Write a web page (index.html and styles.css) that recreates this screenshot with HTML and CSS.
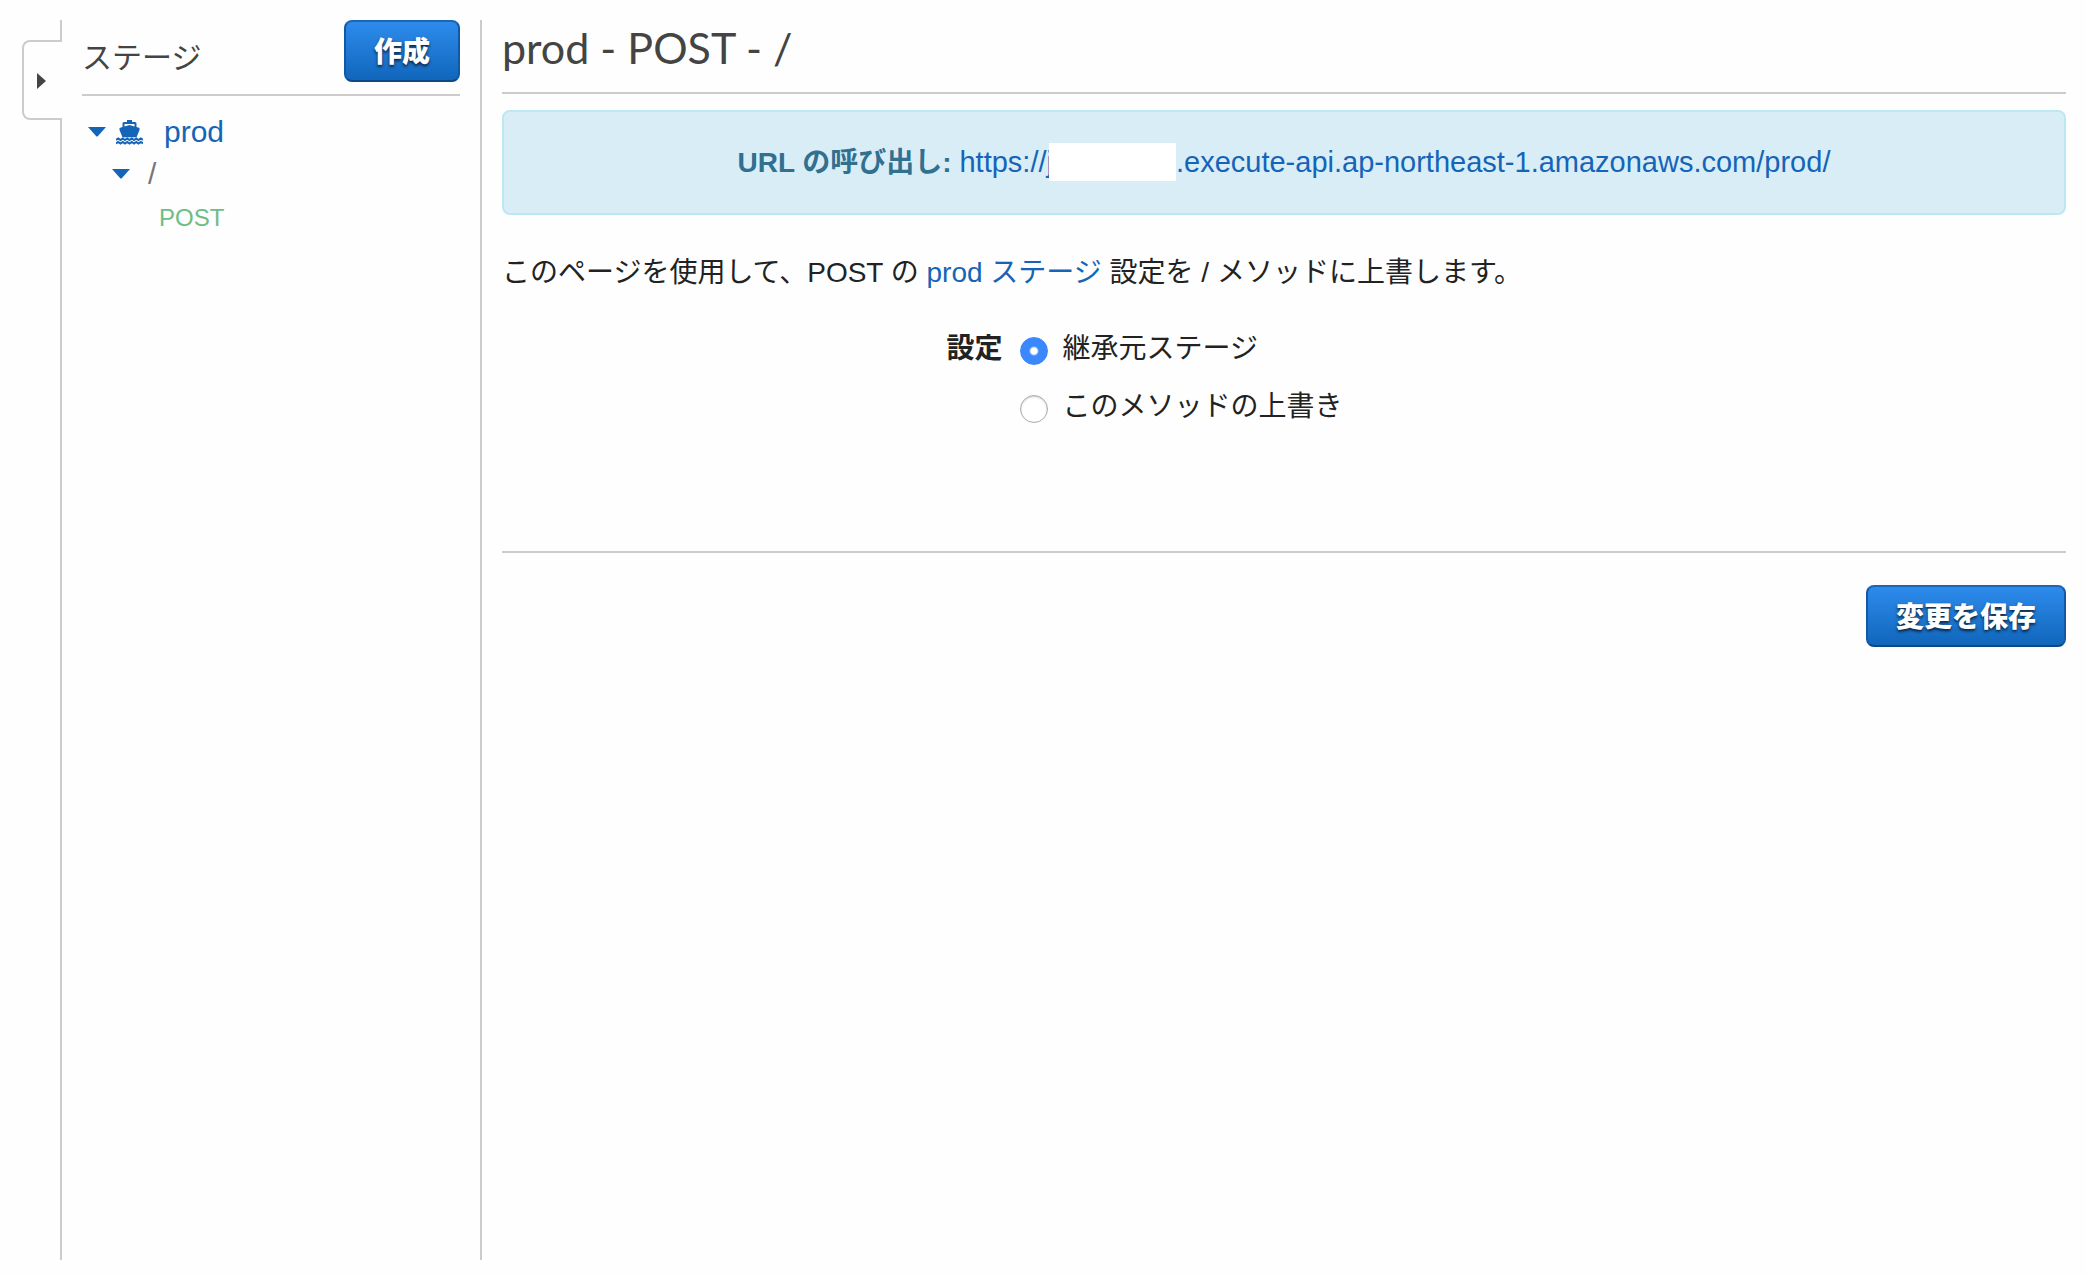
FILE: index.html
```html
<!DOCTYPE html>
<html lang="ja">
<head>
<meta charset="utf-8">
<meta name="viewport" content="width=device-width, initial-scale=1">
<title>prod - POST - /</title>
<link rel="stylesheet" href="styles.css">
</head>
<body>
<div class="console">
  <div class="rail">
    <button class="rail-toggle" type="button" aria-label="ナビゲーションを開く">
      <svg width="9" height="16" viewBox="0 0 9 16" aria-hidden="true"><path d="M0 0L9 8L0 16Z" fill="currentColor"/></svg>
    </button>
  </div>

  <nav class="sidebar">
    <header class="sidebar-header">
      <h2 class="sidebar-title">ステージ</h2>
      <button class="button" type="button">作成</button>
    </header>
    <ul class="tree">
      <li class="tree-row">
        <svg class="caret" viewBox="0 0 18 10" aria-hidden="true"><path d="M0 0H18L10 9Q9 10 8 9Z"/></svg>
        <svg class="ship" viewBox="0 0 27 25" aria-hidden="true">
          <path fill-rule="evenodd" d="M11 0H16V2H19Q20.500 2 20.500 3.500V7L23.500 8V10L20.500 17.300H6.500L3.500 10V8L6.500 7V3.500Q6.500 2 8 2H11ZM8.500 4V6.500L13.500 5L18.500 6.500V4Z"/>
          <path class="wave" d="M0 20L2.250 18.500L4.500 20L6.750 18.500L9 20L11.250 18.500L13.500 20L15.750 18.500L18 20L20.250 18.500L22.500 20L24.750 18.500L27 20M0 23.500L2.250 22L4.500 23.500L6.750 22L9 23.500L11.250 22L13.500 23.500L15.750 22L18 23.500L20.250 22L22.500 23.500L24.750 22L27 23.500"/>
        </svg>
        <a class="tree-stage" href="#prod">prod</a>
      </li>
      <li class="tree-row tree-row-resource">
        <svg class="caret" viewBox="0 0 18 10" aria-hidden="true"><path d="M0 0H18L10 9Q9 10 8 9Z"/></svg>
        <a class="tree-resource" href="#root">/</a>
      </li>
      <li class="tree-row tree-row-method">
        <a class="tree-method" href="#post">POST</a>
      </li>
    </ul>
  </nav>

  <main class="content">
    <h1 class="page-title">prod - POST - /</h1>
    <div class="invoke">
      <strong>URL の呼び出し:</strong>
      <a class="invoke-url" href="#invoke">https://j<span class="redacted"></span>.execute-api.ap-northeast-1.amazonaws.com/prod/</a>
    </div>
    <p class="intro">このページを使用して、POST の <a href="#prod">prod ステージ</a> 設定を / メソッドに上書します。</p>
    <form>
      <div class="settings" role="radiogroup" aria-labelledby="settings-label">
        <span class="settings-label" id="settings-label">設定</span>
        <div class="options">
          <label class="option"><input type="radio" name="settings" checked>継承元ステージ</label>
          <label class="option"><input type="radio" name="settings">このメソッドの上書き</label>
        </div>
      </div>
      <div class="actions">
        <button class="button" type="button">変更を保存</button>
      </div>
    </form>
  </main>
</div>
</body>
</html>
```
FILE: styles.css
```css
* {
  box-sizing: border-box;
}

body {
  margin: 0;
  background: #fefefe;
  color: #222;
  font: 28px/40px "Liberation Sans", "Noto Sans CJK JP", sans-serif;
}

a {
  color: #1464b8;
  text-decoration: none;
}

.console {
  display: grid;
  grid-template-columns: 62px 420px 1fr;
  min-height: 100vh;
  padding: 20px 20px 17px 0;
}

/* Collapsed navigation rail with its pull-out tab */
.rail {
  display: flex;
  flex-direction: column;
  align-items: flex-end;
}

.rail::before,
.rail::after {
  content: "";
  width: 2px;
  height: 20px;
  background: #ccc;
}

.rail::after {
  flex: 1;
}

.rail-toggle {
  display: flex;
  align-items: center;
  width: 40px;
  height: 80px;
  padding: 2px 0 0 13px;
  border: 2px solid #ccc;
  border-right: 0;
  border-radius: 8px 0 0 8px;
  background: transparent;
  color: #444;
}

.sidebar {
  padding: 0 20px;
  border-right: 2px solid #ccc;
}

.sidebar-header {
  display: flex;
  justify-content: space-between;
  align-items: flex-start;
  height: 76px;
  border-bottom: 2px solid #ccc;
}

.sidebar-title {
  margin: 0;
  padding-top: 16px;
  color: #444;
  font-size: 30px;
  font-weight: 400;
  line-height: 44px;
}

.button {
  height: 62px;
  padding: 3px 28px 0;
  border: 2px solid #1159a5;
  border-top-color: #1b66b5;
  border-bottom-color: #0d4885;
  border-radius: 8px;
  background: linear-gradient(#2e8bec, #1166bb);
  color: #fff;
  font: 900 28px/40px "Liberation Sans", "Noto Sans CJK JP", sans-serif;
  text-shadow: 0 2px 3px rgba(0, 0, 0, 0.7);
}

.tree {
  margin: 0;
  padding: 15px 0 0 6px;
  list-style: none;
}

.tree-row {
  display: flex;
  align-items: center;
  height: 42px;
}

.tree-row-resource {
  padding-left: 24px;
}

.tree-row-method {
  height: 46px;
  padding-left: 71px;
}

.caret {
  width: 18px;
  height: 10px;
  fill: #1464b8;
}

.ship {
  width: 27px;
  height: 25px;
  margin: 0 21px 0 10px;
  fill: #1464b8;
}

.wave {
  fill: none;
  stroke: #1464b8;
  stroke-width: 2;
}

.tree-stage {
  font-size: 30px;
}

.tree-resource {
  margin-left: 18px;
  color: #777;
  font-size: 30px;
}

.tree-method {
  color: #6dbd85;
  font-size: 24px;
}

.content {
  padding-left: 20px;
}

.page-title {
  height: 74px;
  margin: 0 0 16px;
  border-bottom: 2px solid #ccc;
  color: #444;
  font: 400 43px/56px Lato, "Noto Sans CJK JP", sans-serif;
}

.invoke {
  padding: 30px;
  border: 2px solid #bce8f1;
  border-radius: 8px;
  background: #d9edf7;
  color: #31708f;
  text-align: center;
}

.invoke-url {
  font-size: 29px;
}

/* Masks the API id, overlapping its first letter a little */
.redacted {
  display: inline-block;
  width: 127px;
  height: 38px;
  margin-left: -4px;
  background: #fff;
  vertical-align: -9px;
}

.intro {
  margin: 38px 0 36px;
}

.settings {
  display: grid;
  grid-template-columns: 32% 1fr;
  column-gap: 18px;
  padding-bottom: 124px;
  border-bottom: 2px solid #ccc;
}

.settings-label {
  font-weight: 700;
  text-align: right;
}

.options {
  display: grid;
  row-gap: 18px;
}

.option {
  display: flex;
  align-items: center;
  gap: 14px;
}

.option input {
  appearance: none;
  width: 28px;
  height: 28px;
  margin: 3px 0 0;
  border: 1px solid #aaa;
  border-radius: 50%;
  background: #fff;
  box-shadow: inset 0 1px 2px rgba(0, 0, 0, 0.2);
}

.option input:checked {
  border-color: #3b88fd;
  background: radial-gradient(circle, #fff 3px, #3b88fd 5px);
  box-shadow: none;
}

.actions {
  display: flex;
  justify-content: flex-end;
  padding-top: 32px;
}
```
